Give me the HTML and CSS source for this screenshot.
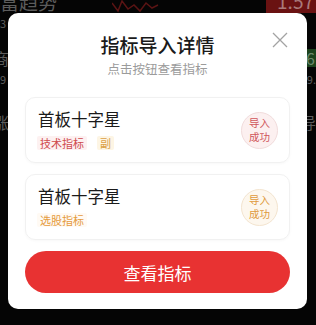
FILE: index.html
```html
<!DOCTYPE html>
<html lang="zh">
<head>
<meta charset="utf-8">
<link rel="stylesheet" href="styles.css">
</head>
<body>
<div class="backdrop">
  <div class="bg-row row-a">
    <span class="bg-text big">富趋势</span>
    <svg class="chart" width="50" height="14" viewBox="0 0 50 14"><path d="M0 4 L6 12 L10 2 L16 10 L22 6 L28 12 L34 4 L40 9 L46 6" fill="none" stroke="#5a1414" stroke-width="1.5"/></svg>
    <span class="red-box">1.57</span>
  </div>
  <div class="bg-row row-b"><span class="bg-text small">3</span></div>
  <div class="bg-row row-c"><span class="bg-text mid cut">商</span><span class="green-box">6</span></div>
  <div class="bg-row row-d"><span class="bg-text small">9</span><span class="bg-text small">9.</span></div>
  <div class="bg-row row-e"><span class="bg-text mid cut">涨</span><span class="bg-text mid">导</span></div>
</div>

<div class="modal">
  <button class="close" aria-label="关闭">
    <svg width="16" height="16" viewBox="0 0 16 16"><path d="M1 1 L15 15 M15 1 L1 15" stroke="#a3a3a3" stroke-width="1.3" fill="none"/></svg>
  </button>
  <div class="header">
    <div class="title">指标导入详情</div>
    <div class="subtitle">点击按钮查看指标</div>
  </div>
  <div class="cards">
    <div class="card">
      <div class="info">
        <div class="name">首板十字星</div>
        <div class="tags">
          <span class="tag tag-red">技术指标</span>
          <span class="tag tag-yellow">副</span>
        </div>
      </div>
      <div class="badge badge-red"><span>导入</span><span>成功</span></div>
    </div>
    <div class="card">
      <div class="info">
        <div class="name">首板十字星</div>
        <div class="tags">
          <span class="tag tag-orange">选股指标</span>
        </div>
      </div>
      <div class="badge badge-orange"><span>导入</span><span>成功</span></div>
    </div>
  </div>
  <button class="primary">查看指标</button>
</div>
</body>
</html>
```

FILE: styles.css
```css
* { box-sizing: border-box; }
html, body {
  margin: 0;
  padding: 0;
  width: 316px;
  height: 325px;
  overflow: hidden;
  background: #050505;
  font-family: "Noto Sans CJK SC", "Noto Sans", sans-serif;
}
.backdrop {
  display: flex;
  flex-direction: column;
}
.bg-row {
  display: flex;
  align-items: center;
  justify-content: space-between;
}
.bg-text { color: #5c5c5c; }
.big { font-size: 19px; line-height: 22px; }
.mid { font-size: 16px; line-height: 18px; }
.small { font-size: 11px; line-height: 12px; }
.cut { margin-left: -7px; }
.row-a { margin-top: -9px; height: 22px; }
.row-a .chart { margin-left: 55px; margin-top: 8px; }
.red-box {
  margin-left: auto;
  width: 50px;
  height: 22px;
  background: #6a1212;
  color: #a97a7a;
  font-size: 19px;
  line-height: 20px;
  text-align: right;
  padding-right: 2px;
}
.row-b { margin-top: 4px; }
.row-c { margin-top: 20px; height: 18px; }
.green-box {
  width: 10px;
  height: 18px;
  background: #1d421d;
  color: #6d8a6d;
  font-size: 16px;
  line-height: 18px;
  overflow: hidden;
}
.row-d { margin-top: 6px; }
.row-e { margin-top: 28px; }

.modal {
  position: fixed;
  left: 8px;
  top: 13px;
  width: 299px;
  height: 296px;
  background: #fff;
  border-radius: 10px;
  padding: 19px 17px 16px;
  display: flex;
  flex-direction: column;
}
.close {
  position: absolute;
  top: 19px;
  right: 19px;
  width: 16px;
  height: 16px;
  padding: 0;
  border: 0;
  background: none;
  display: flex;
}
.header {
  display: flex;
  flex-direction: column;
  align-items: center;
  gap: 2px;
}
.title {
  font-size: 19px;
  line-height: 26px;
  font-weight: 500;
  color: #1a1a1a;
}
.subtitle {
  font-size: 12.5px;
  line-height: 18px;
  color: #9b9b9b;
}
.cards {
  margin-top: 19px;
  display: flex;
  flex-direction: column;
  gap: 11px;
}
.card {
  height: 66px;
  border: 1px solid #f1f1f1;
  border-radius: 10px;
  box-shadow: 0 1px 3px rgba(0,0,0,0.03);
  padding: 10px 11px 0 11px;
  display: flex;
  align-items: center;
  justify-content: space-between;
}
.info {
  display: flex;
  flex-direction: column;
  align-self: flex-start;
}
.name {
  font-size: 16.5px;
  line-height: 22px;
  color: #1a1a1a;
  margin-left: 1px;
}
.tags {
  margin-top: 6px;
  display: flex;
  gap: 10px;
}
.tag {
  font-size: 11px;
  line-height: 14px;
  height: 14px;
  padding: 0 3px;
  border-radius: 2px;
}
.tag-red { color: #cf4a4d; background: #fdf1f1; }
.tag-yellow { color: #dba046; background: #fdf5e4; }
.tag-orange { color: #e59a3c; background: #fffaf4; }
.badge {
  width: 37px;
  height: 37px;
  border-radius: 50%;
  font-size: 10.5px;
  display: flex;
  flex-direction: column;
  align-items: center;
  justify-content: center;
  text-align: center;
  margin-top: -10px;
}
.badge span {
  display: block;
  line-height: 14px;
  height: 14px;
}
.badge-red { background: #fcf0f0; border: 1px solid #f1dcdc; color: #d0565a; }
.badge-orange { background: #fdf7ee; border: 1px solid #f3e4cf; color: #e09a3c; }
.primary {
  margin-top: 11px;
  height: 42px;
  border: 0;
  border-radius: 21px;
  background: #e83232;
  color: #fff;
  font-family: inherit;
  font-size: 17px;
}
```
